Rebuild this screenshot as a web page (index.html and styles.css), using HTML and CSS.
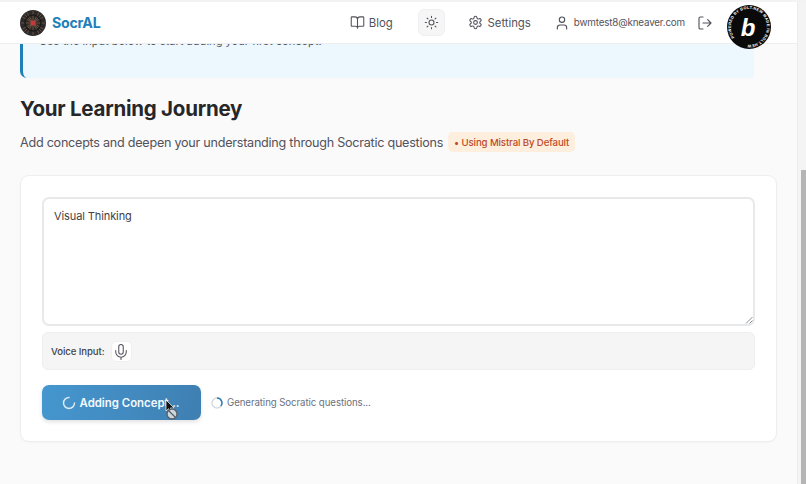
FILE: index.html
```html
<!DOCTYPE html>
<html lang="en">
<head>
<meta charset="utf-8">
<title>SocrAL</title>
<link rel="stylesheet" href="styles.css">
</head>
<body>
<div class="window">
  <div class="page">
    <header class="header">
      <div class="brand">
        <svg class="logo" viewBox="0 0 26 26" width="26" height="26">
          <circle cx="13" cy="13" r="13" fill="#2b2a28"/>
          <g stroke="#7b5a45" stroke-width=".8">
            <path d="M13 1v24M1 13h24M4.5 4.5l17 17M21.500 4.500l-17 17M7 2.500l12 21M19 2.500l-12 21M2.500 7l21 12M23.500 7l-21 12"/>
          </g>
          <circle cx="13" cy="13" r="8" fill="none" stroke="#1c1b1a" stroke-width="1.500"/>
          <circle cx="13" cy="13" r="2.500" fill="#c8383c"/>
        </svg>
        <span class="brand-name">SocrAL</span>
      </div>
      <nav class="nav">
        <a class="nav-link blog">
          <svg class="icon" viewBox="0 0 24 24"><path d="M12 7v14M3 18a1 1 0 0 1-1-1V4a1 1 0 0 1 1-1h5a4 4 0 0 1 4 4 4 4 0 0 1 4-4h5a1 1 0 0 1 1 1v13a1 1 0 0 1-1 1h-6a3 3 0 0 0-3 3 3 3 0 0 0-3-3z"/></svg>
          Blog
        </a>
        <button class="theme">
          <svg class="icon" viewBox="0 0 24 24"><circle cx="12" cy="12" r="4"/><path d="M12 2v2M12 20v2M4.900 4.900l1.400 1.400M17.700 17.700l1.400 1.400M2 12h2M20 12h2M6.300 17.700l-1.400 1.400M19.100 4.900l-1.400 1.400"/></svg>
        </button>
        <a class="nav-link settings">
          <svg class="icon" viewBox="0 0 24 24"><path d="M12.220 2h-.44a2 2 0 0 0-2 2v.18a2 2 0 0 1-1 1.730l-.43.25a2 2 0 0 1-2 0l-.15-.08a2 2 0 0 0-2.730.73l-.22.38a2 2 0 0 0 .73 2.730l.15.1a2 2 0 0 1 1 1.720v.51a2 2 0 0 1-1 1.740l-.15.09a2 2 0 0 0-.73 2.730l.22.38a2 2 0 0 0 2.730.73l.15-.08a2 2 0 0 1 2 0l.43.25a2 2 0 0 1 1 1.730V20a2 2 0 0 0 2 2h.44a2 2 0 0 0 2-2v-.18a2 2 0 0 1 1-1.730l.43-.25a2 2 0 0 1 2 0l.15.08a2 2 0 0 0 2.730-.73l.22-.39a2 2 0 0 0-.73-2.730l-.15-.08a2 2 0 0 1-1-1.740v-.5a2 2 0 0 1 1-1.740l.15-.09a2 2 0 0 0 .73-2.730l-.22-.38a2 2 0 0 0-2.730-.73l-.15.08a2 2 0 0 1-2 0l-.43-.25a2 2 0 0 1-1-1.730V4a2 2 0 0 0-2-2z"/><circle cx="12" cy="12" r="3"/></svg>
          Settings
        </a>
        <span class="user">
          <svg class="icon large" viewBox="0 0 24 24"><path d="M19 21v-2a4 4 0 0 0-4-4H9a4 4 0 0 0-4 4v2"/><circle cx="12" cy="7" r="4"/></svg>
          bwmtest8@kneaver.com
        </span>
        <svg class="icon large" viewBox="0 0 24 24"><path d="M9 21H5a2 2 0 0 1-2-2V5a2 2 0 0 1 2-2h4M16 17l5-5-5-5M21 12H9"/></svg>
      </nav>
    </header>

    <main class="main">
      <div class="notice"><p class="notice-text">Use the input below to start adding your first concept.</p></div>

      <h1 class="title">Your Learning Journey</h1>
      <div class="subtitle-row">
        <p class="subtitle">Add concepts and deepen your understanding through Socratic questions</p>
        <span class="badge">• Using Mistral By Default</span>
      </div>

      <section class="card">
        <div class="textarea">Visual Thinking
          <svg class="grip" viewBox="0 0 8 8" width="8" height="8"><path d="M1 7.500L7.500 1M4.500 7.500L7.500 4.500"/></svg>
        </div>
        <div class="voice">
          <span class="voice-label">Voice Input:</span>
          <span class="mic">
            <svg class="icon mic-icon" viewBox="0 0 24 24"><path d="M12 2a3 3 0 0 0-3 3v7a3 3 0 0 0 6 0V5a3 3 0 0 0-3-3z"/><path d="M19 10v2a7 7 0 0 1-14 0v-2M12 19v3"/></svg>
          </span>
        </div>
        <div class="actions">
          <button class="submit">
            <svg class="spin-white" viewBox="0 0 14 14" width="14" height="14"><path d="M7 1.500A5.500 5.500 0 1 0 12.500 7" class="spin-arc"/></svg>
            Adding Concept...
            <svg class="cursor" viewBox="0 0 20 26" width="20" height="26">
              <path d="M1 1v11l2.600-2.300 1.800 3.700 1.700-.8-1.800-3.600H9z" fill="#111" stroke="#fff" stroke-width=".7"/>
              <circle cx="7" cy="15" r="5" fill="#e4e6e8" fill-opacity=".85" stroke="#5b5f63" stroke-width="1.300"/>
              <path d="M3.500 11.500l7 7" stroke="#5b5f63" stroke-width="1.300"/>
            </svg>
          </button>
          <div class="status">
            <svg viewBox="0 0 14 14" width="12" height="12"><circle cx="7" cy="7" r="5.800" fill="none" stroke="#d6d9de" stroke-width="1.700"/><path d="M7 1.200A5.800 5.800 0 0 1 11.500 10.600" fill="none" stroke="#2a7fb8" stroke-width="1.700"/></svg>
            <span>Generating Socratic questions...</span>
          </div>
        </div>
      </section>
    </main>

    <svg class="bolt" viewBox="0 0 44 44" width="44" height="44">
      <defs><path id="ring" d="M7.500 32.500a18 18 0 1 1 29 0a18 18 0 0 1-29 0"/></defs>
      <circle cx="22" cy="22" r="22" fill="#0a0a0a"/>
      <text class="bolt-text"><textPath href="#ring">POWERED BY BOLT.NEW MADE IN BOLT.NEW</textPath></text>
      <text class="bolt-b" x="21" y="31" text-anchor="middle">b</text>
    </svg>
  </div>
  <div class="scrollbar"><div class="thumb"></div></div>
</div>
</body>
</html>
```

FILE: styles.css
```css
* { box-sizing: border-box; }
html, body { margin: 0; height: 100%; overflow: hidden; }
body { font-family: Inter, "Liberation Sans", sans-serif; background: #fafafa; color: #52525b; }
.window { display: flex; height: 484px; padding-top: 2px; background: #f3f3f3; }
.page { position: relative; width: 797px; background: #fafafa; display: flex; flex-direction: column; }

.header { height: 42px; flex: none; background: #fff; border-bottom: 1px solid #eceef0; display: flex; align-items: center; justify-content: space-between; padding: 0 0 0 20px; position: relative; z-index: 1; }
.brand { display: flex; align-items: center; gap: 6px; }
.logo { display: block; }
.brand-name { font-size: 14.200px; font-weight: 700; letter-spacing: -.3px; color: #1e80b9; }
.nav { display: flex; align-items: center; margin-right: 84px; color: #52525b; font-size: 11.400px; letter-spacing: -.06px; }
.nav-link { display: flex; align-items: center; gap: 5px; }
.icon { width: 15px; height: 15px; fill: none; stroke: #52525b; stroke-width: 1.700; stroke-linecap: round; stroke-linejoin: round; flex: none; }
.icon.large { width: 16px; height: 16px; }
.blog { gap: 4px; margin-right: 25px; }
.theme { width: 27px; height: 27px; padding: 0; border: 1px solid #f0f0f2; border-radius: 6px; background: #f6f6f7; display: flex; align-items: center; justify-content: center; margin-right: 23px; }
.settings { margin-right: 23px; }
.user { display: flex; align-items: center; gap: 4px; font-size: 9.800px; letter-spacing: -.16px; margin-right: 12px; }
.bolt { position: absolute; left: 727px; top: 3px; z-index: 2; }
.bolt-text { font-family: "Liberation Sans", sans-serif; font-size: 3.900px; font-weight: 700; letter-spacing: .3px; fill: #fff; }
.bolt-b { font-family: "Liberation Sans", sans-serif; font-size: 24px; font-weight: 700; font-style: italic; fill: #fff; }

.main { padding: 0 20px; flex: 1; display: flex; flex-direction: column; }
.notice { height: 34px; width: 734px; background: #ecf7fe; border-left: 3px solid #1e80b9; border-bottom-left-radius: 7px; border-bottom-right-radius: 4px; overflow: hidden; display: flex; align-items: flex-end; padding: 0 0 29px 16px; }
.notice-text { margin: 0; font-size: 11.100px; line-height: 16px; white-space: nowrap; color: #52525b; }
.title { margin: 18px 0 0; font-size: 20.500px; line-height: 26px; font-weight: 700; letter-spacing: -.25px; color: #27272a; }
.subtitle-row { display: flex; align-items: center; gap: 5px; margin-top: 10px; height: 20px; }
.subtitle { margin: 0; font-size: 12.600px; letter-spacing: -.25px; color: #52525b; white-space: nowrap; }
.badge { background: #feeedd; color: #bd4a25; font-size: 9.600px; font-weight: 500; letter-spacing: -.1px; height: 20px; width: 127px; border-radius: 5px; display: flex; align-items: center; justify-content: center; white-space: nowrap; }

.card { margin-top: 23px; width: 757px; height: 267px; background: #fff; border: 1px solid #eeeeee; border-radius: 9px; padding: 21px 21px 0; display: flex; flex-direction: column; box-shadow: 0 1px 2px rgba(0,0,0,.03); }
.textarea { position: relative; height: 129px; width: 713px; border: 2px solid #e8e9eb; border-radius: 7px; padding: 9px 10px; font-size: 11px; letter-spacing: -.1px; line-height: 16px; color: #3f3f46; }
.grip { position: absolute; right: 0; bottom: 0; fill: none; stroke: #8a8f96; stroke-width: 1; }
.voice { margin-top: 6px; height: 38px; width: 713px; background: #f5f5f5; border: 1px solid #eeeeee; border-radius: 6px; display: flex; align-items: center; padding-left: 8px; gap: 6px; }
.voice-label { font-size: 9.600px; letter-spacing: -.08px; font-weight: 500; color: #3f3f46; }
.mic { width: 21px; height: 21px; background: #fff; border-radius: 5px; border: 1px solid #f0f0f0; padding-top: 2px; display: flex; align-items: center; justify-content: center; }
.mic-icon { width: 18px; height: 18px; stroke-width: 1.400; }
.actions { margin-top: 15px; display: flex; align-items: center; gap: 10px; }
.submit { position: relative; width: 159px; height: 35px; border: 0; border-radius: 7px; background: linear-gradient(100deg, #4597cf, #3f7fb2); color: #f4f9fd; font-family: inherit; font-size: 11.400px; font-weight: 600; display: flex; align-items: center; justify-content: center; gap: 4px; padding: 0 2px 0 0; box-shadow: 0 2px 4px rgba(0,0,0,.12); white-space: nowrap; }
.spin-white { display: block; }
.spin-arc { fill: none; stroke: #d9e9f5; stroke-width: 1.500; stroke-linecap: round; }
.cursor { position: absolute; left: 123px; top: 14px; }
.status { display: flex; align-items: center; gap: 4px; font-size: 9.700px; letter-spacing: -.09px; color: #6b7280; }
.status svg { display: block; }

.scrollbar { width: 9px; height: 482px; background: #f4f4f4; border-left: 1px solid #ececec; position: relative; display: flex; justify-content: flex-end; padding-top: 168px; }
.thumb { width: 5px; height: 314px; background: #b5b5b5; }
```
